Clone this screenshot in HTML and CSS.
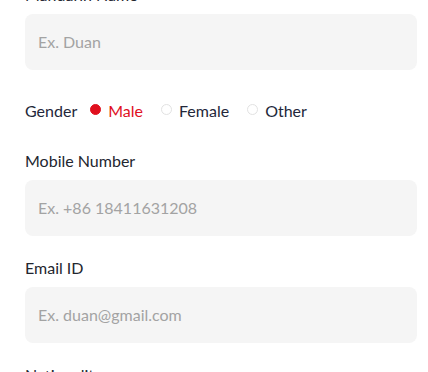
FILE: index.html
```html
<!DOCTYPE html>
<html lang="en">
<head>
    <meta charset="UTF-8">
    <meta name="viewport" content="width=device-width, initial-scale=1.0">
    <title>Profile Form</title>
    <link rel="stylesheet" href="styles.css">
</head>
<body>
    <form id="profileForm">
        <div class="field">
            <label for="mandarinName">Mandarin Name</label>
            <input type="text" id="mandarinName" placeholder="Ex. Duan">
        </div>

        <div class="gender-row">
            <span class="gender-label">Gender</span>
            <label class="radio checked">
                <input type="radio" name="gender" value="male" checked>
                <span class="dot"></span>
                Male
            </label>
            <label class="radio">
                <input type="radio" name="gender" value="female">
                <span class="dot"></span>
                Female
            </label>
            <label class="radio">
                <input type="radio" name="gender" value="other">
                <span class="dot"></span>
                Other
            </label>
        </div>

        <div class="field">
            <label for="mobile">Mobile Number</label>
            <input type="text" id="mobile" placeholder="Ex. +86 18411631208">
        </div>

        <div class="field">
            <label for="email">Email ID</label>
            <input type="text" id="email" placeholder="Ex. duan@gmail.com">
        </div>

        <div class="field">
            <label for="nationality">Nationality</label>
            <input type="text" id="nationality" placeholder="Ex. Chinese">
        </div>
    </form>
</body>
</html>
```

FILE: styles.css
```css
body {
    font-family: Lato, "Open Sans", sans-serif;
    margin: 0;
    background: #fff;
    overflow: hidden;
}
#profileForm {
    margin-top: -15px;
    padding: 0 11px 0 25px;
}
.field {
    margin-bottom: 22px;
}
.field label {
    display: block;
    font-size: 16px;
    line-height: 20px;
    color: #23262f;
    margin-bottom: 9px;
}
.field input {
    display: block;
    width: 100%;
    height: 56px;
    box-sizing: border-box;
    padding: 0 13px 1px;
    border: none;
    border-radius: 8px;
    background-color: #f5f5f5;
    font-family: inherit;
    font-size: 16px;
    color: #23262f;
    outline: none;
}
.field input::placeholder {
    color: #a3a3a3;
}
.gender-row {
    display: flex;
    align-items: center;
    height: 20px;
    margin: 30px 0 31px;
    font-size: 16px;
    color: #23273a;
}
.gender-label {
    margin-right: 13px;
}
.radio {
    display: flex;
    align-items: center;
    margin-right: 18px;
}
.radio input {
    display: none;
}
.dot {
    width: 9px;
    height: 9px;
    border: 1px solid #e2e2e2;
    border-radius: 50%;
    margin-right: 7px;
    margin-top: -2px;
}
.radio.checked {
    color: #e0101e;
}
.radio.checked .dot {
    background: #e0101e;
    border-color: #e0101e;
}
```
